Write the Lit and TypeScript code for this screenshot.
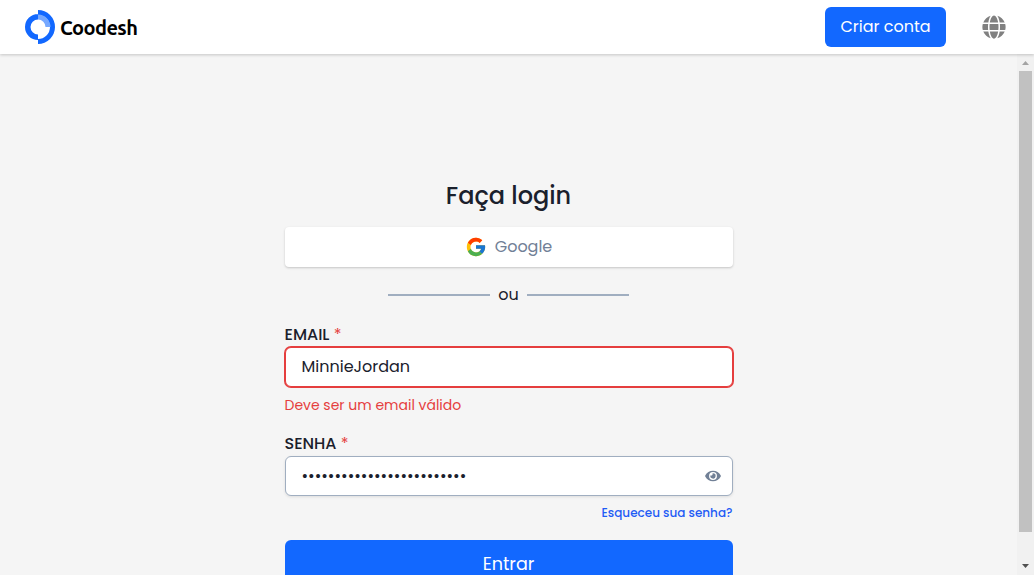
import { LitElement, html, css } from "lit";
import { customElement, state } from "lit/decorators.js";

@customElement("app-root")
export class AppRoot extends LitElement {
  @state() private email = "MinnieJordan";
  @state() private passwordLength = 25;

  static styles = css`
    :host { display: flex; flex-direction: column; width: 100%; height: 100vh; overflow: hidden; background: #f5f5f5; color: #1a202c; font-family: Poppins, Inter, "Open Sans", sans-serif; font-size: 16px; line-height: 24px; white-space: nowrap; }
    * { box-sizing: border-box; }
    svg { display: block; flex: none; }
    header { display: flex; align-items: center; height: 54px; flex: none; padding: 0 28px 0 24px; background: #fff; box-shadow: 0 1px 3px rgba(0,0,0,.2); z-index: 1; }
    .brand { display: flex; align-items: center; gap: 4px; color: #000; }
    .brand-name { padding-top: 1px; font: 700 20px/28px Ubuntu, "Noto Sans", sans-serif; letter-spacing: -.57px; }
    .signup { margin-left: auto; width: 121px; height: 40px; border: 0; border-radius: 6px; background: #1268ff; color: #fff; font: inherit; padding: 0; }
    .globe { margin-left: 36px; color: #808080; }
    .body { flex: 1; min-height: 0; display: flex; }
    main { flex: 1; display: flex; justify-content: center; overflow: hidden; }
    form { width: 448px; padding-top: 124px; display: flex; flex-direction: column; }
    h1 { margin: 0 0 13px; text-align: center; font-size: 24px; line-height: 36px; font-weight: 500; }
    .google { display: flex; align-items: center; justify-content: center; gap: 8px; flex: none; height: 40px; border-radius: 4px; background: #fff; color: #718096; box-shadow: 0 1px 3px rgba(0,0,0,.1), 0 1px 2px rgba(0,0,0,.1); }
    .divider { display: flex; align-items: center; justify-content: center; gap: 8px; margin: 16px 0; }
    .rule { width: 102px; height: 2px; background: #a0aec0; }
    label { font-weight: 500; }
    .required { color: #e53e3e; font-weight: 400; }
    .field { display: flex; align-items: center; flex: none; height: 40px; padding: 0 11px 0 16px; border: 1px solid #a0aec0; border-radius: 6px; background: #fff; box-shadow: 0 1px 3px rgba(0,0,0,.1); }
    .invalid { border-color: #e53e3e; box-shadow: 0 0 0 1px #e53e3e; }
    .error { margin: 8px 0 16px; color: #e53e3e; font-size: 14px; line-height: 21px; }
    .dots { flex: 1; }
    .eye { color: #718096; }
    .forgot { align-self: flex-end; margin: 8px 0 18px; color: #1f5cf5; font-size: 12px; line-height: 18px; font-weight: 500; }
    .submit { flex: none; height: 48px; border: 0; border-radius: 6px; background: #1268ff; color: #fff; font: inherit; font-size: 17.6px; }
    .scrollbar { width: 17px; flex: none; display: flex; flex-direction: column; align-items: center; background: #f1f1f1; }
    .arrow { width: 17px; height: 17px; fill: #a3a3a3; }
    .down { fill: #505050; }
    .thumb { width: 13px; height: 461px; background: #c1c1c1; }
    .track { flex: 1; }
  `;

  render() {
    return html`
      <header>
        <div class="brand">
          <svg width="32" height="36" viewBox="0 0 32 36">
            <path fill="#1268ff" d="M14 5a13 13 0 0 0 0 26v-5.500a7.500 7.500 0 0 1 0-15zM14 1a17 17 0 0 1 0 34v-5a12 12 0 0 0 0-24z"/>
            <path fill="#76a8ff" d="M14 5.500a12.500 12.500 0 0 1 12.500 12.500h-5a7.500 7.500 0 0 0-7.500-7.500z"/>
          </svg>
          <span class="brand-name">Coodesh</span>
        </div>
        <button class="signup">Criar conta</button>
        <svg class="globe" width="24" height="24" viewBox="0 0 496 512" fill="currentColor"><path d="M336.5 160C322 70.7 287.8 8 248 8s-74 62.7-88.5 152h177zM152 256c0 22.2 1.2 43.5 3.3 64h185.3c2.1-20.5 3.3-41.8 3.3-64s-1.2-43.5-3.3-64H155.3c-2.1 20.5-3.3 41.8-3.3 64zm324.7-96c-28.6-67.9-86.5-120.4-158-141.6 24.4 33.8 41.2 84.7 50 141.6h108zM177.2 18.4C105.8 39.6 47.8 92.1 19.3 160h108c8.7-56.9 25.5-107.8 49.9-141.6zM487.4 192H372.7c2.1 21 3.3 42.5 3.3 64s-1.2 43-3.3 64h114.6c5.5-20.5 8.6-41.8 8.6-64s-3.1-43.5-8.5-64zM120 256c0-21.5 1.2-43 3.3-64H8.6C3.2 212.5 0 233.8 0 256s3.2 43.5 8.6 64h114.6c-2-21-3.2-42.5-3.2-64zm39.5 96c14.5 89.3 48.7 152 88.5 152s74-62.7 88.5-152h-177zm159.3 141.6c71.4-21.2 129.4-73.7 158-141.6h-108c-8.8 56.9-25.6 107.8-50 141.6zM19.3 352c28.6 67.9 86.5 120.4 158 141.6-24.4-33.8-41.2-84.7-50-141.6h-108z"/></svg>
      </header>
      <div class="body">
        <main>
          <form>
            <h1>Faça login</h1>
            <div class="google">
              <svg width="22" height="22" viewBox="0 0 48 48">
                <path fill="#FFC107" d="M43.611 20.083H42V20H24v8h11.303c-1.649 4.657-6.08 8-11.303 8-6.627 0-12-5.373-12-12s5.373-12 12-12c3.059 0 5.842 1.154 7.961 3.039l5.657-5.657C34.046 6.053 29.268 4 24 4 12.955 4 4 12.955 4 24s8.955 20 20 20 20-8.955 20-20c0-1.341-.138-2.65-.389-3.917z"/>
                <path fill="#FF3D00" d="M6.306 14.691l6.571 4.819C14.655 15.108 18.961 12 24 12c3.059 0 5.842 1.154 7.961 3.039l5.657-5.657C34.046 6.053 29.268 4 24 4 16.318 4 9.656 8.337 6.306 14.691z"/>
                <path fill="#4CAF50" d="M24 44c5.166 0 9.86-1.977 13.409-5.192l-6.19-5.238C29.211 35.091 26.715 36 24 36c-5.202 0-9.619-3.317-11.283-7.946l-6.522 5.025C9.505 39.556 16.227 44 24 44z"/>
                <path fill="#1976D2" d="M43.611 20.083H42V20H24v8h11.303c-.792 2.237-2.231 4.166-4.087 5.571l6.193 5.238C36.971 39.205 44 34 44 24c0-1.341-.138-2.65-.389-3.917z"/>
              </svg>
              <span>Google</span>
            </div>
            <div class="divider"><span class="rule"></span><span>ou</span><span class="rule"></span></div>
            <label>EMAIL <span class="required">*</span></label>
            <div class="field invalid"><span>${this.email}</span></div>
            <div class="error">Deve ser um email válido</div>
            <label>SENHA <span class="required">*</span></label>
            <div class="field">
              <span class="dots">${"•".repeat(this.passwordLength)}</span>
              <svg class="eye" width="16" height="14" viewBox="0 0 576 512" fill="currentColor"><path d="M572.52 241.4C518.29 135.59 410.93 64 288 64S57.68 135.64 3.48 241.41a32.35 32.35 0 0 0 0 29.19C57.71 376.41 165.07 448 288 448s230.32-71.64 284.52-177.41a32.35 32.35 0 0 0 0-29.19zM288 400a144 144 0 1 1 144-144 143.93 143.93 0 0 1-144 144zm0-240a95.31 95.31 0 0 0-25.31 3.79 47.85 47.85 0 0 1-66.9 66.9A95.78 95.78 0 1 0 288 160z"/></svg>
            </div>
            <a class="forgot">Esqueceu sua senha?</a>
            <button class="submit" type="button">Entrar</button>
          </form>
        </main>
        <div class="scrollbar">
          <svg class="arrow" viewBox="0 0 17 17"><path d="M5 11h7L8.500 7z"/></svg>
          <div class="thumb"></div>
          <div class="track"></div>
          <svg class="arrow down" viewBox="0 0 17 17"><path d="M5 6h7L8.500 10z"/></svg>
        </div>
      </div>`;
  }
}
